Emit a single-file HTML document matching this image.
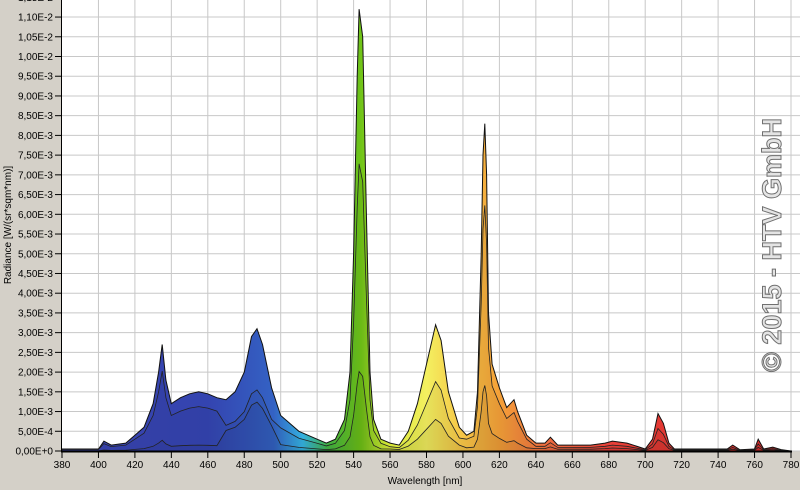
<!DOCTYPE html>
<html><head><meta charset="utf-8"><style>
html,body{margin:0;padding:0;background:#d4d0c8;width:800px;height:490px;overflow:hidden;font-family:"Liberation Sans",sans-serif}
</style></head><body>
<svg id="s" width="800" height="490" xmlns="http://www.w3.org/2000/svg" style="position:absolute;left:0;top:0">
<defs>
<linearGradient id="g" gradientUnits="userSpaceOnUse" x1="62" y1="0" x2="791" y2="0">
<stop offset="0" stop-color="#3a44b0"/>
<stop offset="0.2" stop-color="#3444b0"/>
<stop offset="0.29" stop-color="#3462c4"/>
<stop offset="0.33" stop-color="#34b0e0"/>
<stop offset="0.365" stop-color="#40b040"/>
<stop offset="0.41" stop-color="#70c418"/>
<stop offset="0.45" stop-color="#d8e838"/>
<stop offset="0.5" stop-color="#f4f060"/>
<stop offset="0.545" stop-color="#f6c848"/>
<stop offset="0.6" stop-color="#f4a038"/>
<stop offset="0.66" stop-color="#f07040"/>
<stop offset="0.75" stop-color="#e84038"/>
<stop offset="1" stop-color="#d82828"/>
</linearGradient>
</defs>
<rect x="62" y="0" width="738" height="451" fill="#fff"/>
<g id="grid" stroke="#c8c8c8" stroke-width="1"></g>
<g id="spec"></g>
<line x1="61.5" y1="0" x2="61.5" y2="452" stroke="#000"/>
<line x1="61" y1="451.5" x2="792" y2="451.5" stroke="#000" stroke-width="2"/>
<g id="lab" font-size="10" fill="#000"></g>
<text x="425" y="484" font-size="10" text-anchor="middle">Wavelength [nm]</text>
<text transform="translate(11,225) rotate(-90)" font-size="10" text-anchor="middle">Radiance [W/(sr*sqm*nm)]</text>
<text transform="translate(781,245) rotate(-90)" font-size="27" font-weight="bold" text-anchor="middle" fill="#e4e4e4" stroke="#707070" stroke-width="1">© 2015 - HTV GmbH</text>
</svg>
<script>
var X=w=>62+(w-380)*1.8225, Y=v=>451-v*39.45;
var ns="http://www.w3.org/2000/svg";
function el(t,a,p){var e=document.createElementNS(ns,t);for(var k in a)e.setAttribute(k,a[k]);document.getElementById(p).appendChild(e);return e;}
for(var i=0;i<=23;i++){var y=Y(i*0.5);el("line",{x1:62,x2:800,y1:y,y2:y},"grid");
var v=i*0.5e-3,s;if(i==0)s="0,00E+0";else{var e=Math.floor(Math.log10(v)+1e-9);var m=v/Math.pow(10,e);s=m.toFixed(2).replace(".",",")+"E"+e;}
var t=el("text",{x:53,y:y+3.5,"text-anchor":"end"},"lab");t.textContent=s;el("line",{x1:55,x2:61,y1:y,y2:y,stroke:"#000"},"lab");}
for(var w=380;w<=780;w+=20){var x=X(w);if(w>380)el("line",{x1:x,x2:x,y1:0,y2:451},"grid");
var t=el("text",{x:x,y:468,"text-anchor":"middle"},"lab");t.textContent=w;el("line",{x1:x,x2:x,y1:452,y2:458,stroke:"#000"},"lab");}
var P=[[380,.05],[400,.05],[403,.25],[407,.15],[415,.2],[420,.4],[425,.6],[430,1.2],[433,2],[435,2.7],[437,1.8],[440,1.2],[445,1.35],[450,1.45],[455,1.5],[460,1.45],[465,1.35],[470,1.3],[475,1.5],[480,2],[484,2.9],[487,3.1],[490,2.7],[495,1.6],[500,.9],[510,.5],[520,.3],[525,.2],[530,.3],[535,.8],[538,2],[540,5],[542,9.5],[543,11.2],[545,10.5],[547,6],[549,2],[551,.8],[555,.3],[560,.2],[565,.15],[570,.5],[575,1.2],[580,2.2],[585,3.2],[588,2.8],[592,1.5],[598,.6],[602,.4],[606,.5],[608,1.5],[610,5],[611,7.5],[612,8.3],[613,7],[614,3.5],[616,2.2],[620,1.6],[624,1.1],[628,1.3],[630,1],[635,.4],[640,.2],[645,.2],[648,.35],[652,.15],[660,.15],[670,.15],[678,.2],[682,.25],[690,.2],[700,.05],[704,.3],[707,.95],[710,.7],[713,.2],[716,.05],[745,.05],[748,.15],[752,.03],[760,.05],[762,.3],[765,.05],[770,.1],[775,.03],[780,0]];
function path(f){var d="M"+X(380)+","+Y(0);P.forEach(p=>{d+="L"+X(p[0]).toFixed(1)+","+Y(f(p[0],p[1])).toFixed(1)});return d+"L"+X(780)+","+Y(0)+"Z";}
el("path",{d:path((w,v)=>v),fill:"url(#g)",stroke:"#111","stroke-width":1},"spec");
el("path",{d:path((w,v)=>v*(w<470?0.75:w<500?0.5:w<560?0.65:w<600?0.55:w<640?0.75:0.6)),fill:"rgba(0,0,0,0.05)",stroke:"#222","stroke-width":0.8},"spec");
el("path",{d:path((w,v)=>v*(w<470?0.1:w<500?0.4:w<560?0.18:w<600?0.25:w<640?0.2:0.3)),fill:"rgba(0,0,0,0.05)",stroke:"#222","stroke-width":0.8},"spec");
</script>
</body></html>
